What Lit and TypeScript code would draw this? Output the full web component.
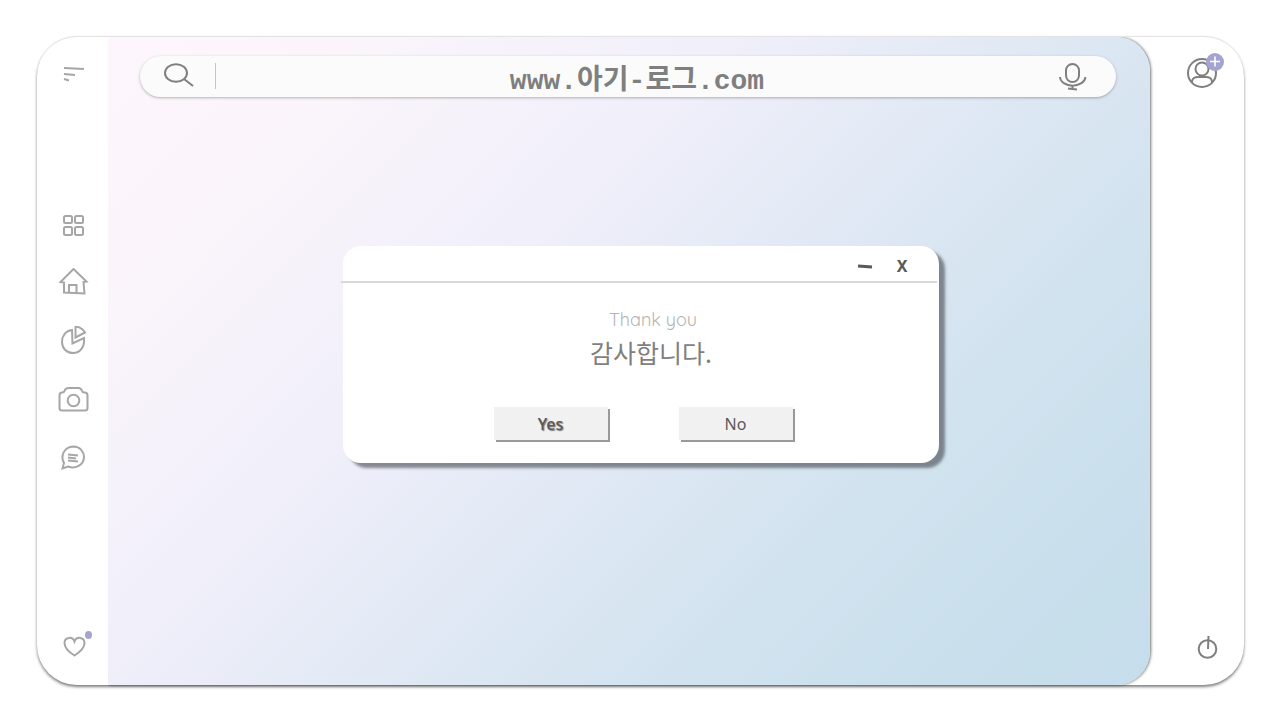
import { LitElement, html, svg, css } from "lit";
import { customElement, state } from "lit/decorators.js";

const navItems = [
  {
    label: "Apps",
    art: svg`<rect x="6" y="6" width="8" height="7" rx="1.5"/><rect x="17" y="6" width="8" height="7" rx="1.5"/><rect x="6" y="17" width="8" height="8" rx="1.5"/><rect x="17" y="17" width="8" height="8" rx="1.5"/>`,
  },
  {
    label: "Home",
    art: svg`<path d="M15.5 1 28.500 13.500L25.500 14L26.500 25.500L6 24.500V14.500L2.500 14Z"/><path d="M11 24.500V17H18.500V25"/>`,
  },
  {
    label: "Statistics",
    art: svg`<path d="M14 4C7 5 4 10.500 4 16C4 22.500 9 27 15 27C22 27 27 21 26 12L14.500 17.500Z"/><path d="M17.500 0.500C22 1 25 3 27 6.500L17.500 11.500Z"/>`,
  },
  {
    label: "Camera",
    art: svg`<path d="M4 26.500Q1.500 26.500 1.500 24V11.500Q1.500 8.500 4 8.500Q6 8.500 6.500 7Q7.500 4 10.500 4H20.500Q23 4 24 7Q24.500 8.500 26.500 8.500Q29.500 8.500 29.500 11.500V24Q29.500 26.500 27 26.500Z"/><circle cx="15.500" cy="16.500" r="5.800"/>`,
  },
  {
    label: "Messages",
    art: svg`<path d="M4.500 26.500L6 21C2.500 15 5 5 15.500 4.500C22 4.500 26 10 26 15C26 23 17 27.500 10 24.500Z"/><path d="M10 12.500L20 13.500M10 15.500L18 16.500M10 18.500L20 19.500"/>`,
  },
];

@customElement("app-root")
export class AppRoot extends LitElement {
  @state() private address = "www.아기-로그.com";

  static styles = css`
    :host {
      display: block;
      font-family: "Noto Sans", "Noto Sans CJK KR", sans-serif;
      color: #595959;
    }
    * { box-sizing: border-box; }
    button {
      font: inherit;
      color: inherit;
      border: 0;
      padding: 0;
      background: none;
      cursor: pointer;
    }
    svg {
      display: block;
      fill: none;
      stroke: currentColor;
      stroke-width: 2;
    }
    .page {
      min-height: 100vh;
      display: flex;
      padding: 36px 36px 35px 37px;
      background: #fff;
      position: relative;
    }
    .shell {
      flex: 1;
      display: flex;
      border-radius: 40px;
      background: #fff;
      border-top: 1px solid #e4e4e4;
      box-shadow: 0 2px 3px rgba(0, 0, 0, 0.5);
    }
    .side {
      width: 71px;
      padding: 20px 0 20px 1px;
      display: flex;
      flex-direction: column;
      align-items: center;
      justify-content: space-between;
      color: #a6a6a6;
    }
    .nav {
      display: flex;
      flex-direction: column;
      gap: 26px;
      padding-bottom: 36px;
    }
    .canvas {
      flex: 1;
      min-width: 0;
      padding: 19px 34px 0 32px;
      border-radius: 0 34px 34px 0;
      background: linear-gradient(135deg, #fdf6fc 0%, #fbf5fb 15%, #f0effa 37%, #d4e4f0 68%, #c9dfec 87%, #c6ddeb 100%);
      box-shadow: 1px 0 3px rgba(0, 0, 0, 0.55);
      clip-path: inset(0 -6px -6px 0);
    }
    .search {
      height: 41px;
      display: flex;
      align-items: center;
      gap: 20px;
      padding: 0 28px 2px 23px;
      border-radius: 21px;
      background: #fbfbfb;
      box-shadow: 0 1px 3px rgba(0, 0, 0, 0.28);
      color: #7f7f7f;
    }
    .divider {
      width: 1px;
      height: 26px;
      background: #c4c4c4;
    }
    .address {
      flex: 1;
      min-width: 0;
      height: 39px;
      padding: 2px 0 0;
      border: 0;
      outline: 0;
      background: none;
      color: #7f7f7f;
      text-align: center;
      font: bold 28px "Liberation Mono", "Noto Sans CJK KR", monospace;
    }
    .account {
      width: 94px;
      padding: 16px 0 25px;
      display: flex;
      flex-direction: column;
      align-items: center;
      justify-content: space-between;
      color: #7f7f7f;
    }
    .profile, .likes { position: relative; }
    .profile { padding-left: 10px; }
    .power { padding-left: 20px; }
    .menu, .likes { padding-left: 2px; }
    .badge {
      position: absolute;
      top: 0;
      right: -6px;
      width: 18px;
      height: 18px;
      border-radius: 50%;
      background: #a5a3d0;
      color: #fff;
    }
    .dot {
      position: absolute;
      top: 0;
      right: -6px;
      width: 7px;
      height: 8px;
      border-radius: 50%;
      background: #a5a3d0;
    }
    .overlay {
      position: absolute;
      inset: 0;
      display: grid;
      place-items: center;
      padding: 0 0 11px 2px;
      pointer-events: none;
    }
    .dialog {
      width: 596px;
      max-width: 90%;
      pointer-events: auto;
      border-radius: 18px;
      background: #fff;
      box-shadow: 6px 5px 3px rgba(70, 75, 80, 0.62);
      text-align: center;
    }
    .titlebar {
      height: 37px;
      display: flex;
      justify-content: flex-end;
      align-items: center;
      gap: 22px;
      padding: 5px 28px 0;
      margin: 0 2px 0 -2px;
      border-bottom: 2px solid #d9d9d9;
    }
    .close {
      font-size: 16px;
      font-weight: 700;
      line-height: 24px;
      width: 14px;
    }
    .message {
      padding: 24px 0 0 24px;
    }
    .thanks {
      margin: 0;
      font: 400 18px/26px Quicksand, "Noto Sans", sans-serif;
      color: #b3b3b3;
    }
    .korean {
      margin: 0;
      padding-right: 4px;
      font: 400 25px/38px "Noto Sans CJK KR", sans-serif;
      color: #7f7f7f;
    }
    .actions {
      display: flex;
      justify-content: center;
      gap: 71px;
      padding: 36px 0 23px 4px;
    }
    .choice {
      width: 114px;
      height: 33px;
      background: #f1f1f1;
      font-size: 16px;
      box-shadow: 2px 2px 0 #999;
    }
    .primary {
      font-weight: 500;
      text-shadow: 1px 1px 1px rgba(0, 0, 0, 0.5);
    }
  `;

  render() {
    return html`
      <div class="page">
        <div class="shell">
          <aside class="side">
            <button class="menu" aria-label="Menu">
              <svg width="24" height="32"><path d="M2 11L22 12M2 17L13 18M2 22L7 23.500"/></svg>
            </button>
            <nav class="nav">
              ${navItems.map(
                (item) => html`<button aria-label=${item.label}>
                  <svg width="31" height="32">${item.art}</svg>
                </button>`
              )}
            </nav>
            <button class="likes" aria-label="Likes">
              <svg width="24" height="34"><path d="M12.500 24.500C5 20 2.500 16 2.500 12C2.500 6 10.500 5 12.500 10.500C14.500 5 22.500 6 22.500 12C22.500 16 19.500 20 12.500 24.500Z"/></svg>
              <span class="dot"></span>
            </button>
          </aside>

          <main class="canvas">
            <form class="search" @submit=${(e: Event) => e.preventDefault()}>
              <button aria-label="Search">
                <svg width="32" height="32"><ellipse cx="13" cy="13" rx="11" ry="8.800"/><path d="M21 19L30 26"/></svg>
              </button>
              <span class="divider"></span>
              <input
                class="address"
                aria-label="Address"
                .value=${this.address}
                @input=${(e: Event) => (this.address = (e.target as HTMLInputElement).value)}
              />
              <button type="button" aria-label="Voice search">
                <svg width="30" height="32"><rect x="8" y="4" width="13" height="18" rx="6.500"/><path d="M2 17C3 28.500 26 28.500 27.500 17M14.500 26V29M10 28.500L19 29.500"/></svg>
              </button>
            </form>
          </main>

          <aside class="account">
            <button class="profile" aria-label="Profile">
              <svg width="32" height="38"><circle cx="16" cy="20" r="14"/><circle cx="16" cy="16" r="6.500"/><path d="M6 30V28Q7 24 12 24H20Q25 24 26 28V30"/></svg>
              <svg class="badge" viewBox="0 0 18 18"><path d="M9 3.500V13.500M4 8.500H14" stroke-width="1.600"/></svg>
            </button>
            <button class="power" aria-label="Power">
              <svg width="22" height="26"><circle cx="11.500" cy="15" r="8.800"/><path d="M12.500 2L12 15"/></svg>
            </button>
          </aside>
        </div>

        <div class="overlay">
          <section class="dialog" role="dialog" aria-labelledby="thanks">
            <header class="titlebar">
              <button aria-label="Minimize">
                <svg width="16" height="16"><path d="M1 8L15 9" stroke-width="3"/></svg>
              </button>
              <button class="close" aria-label="Close">X</button>
            </header>
            <div class="message">
              <p class="thanks" id="thanks">Thank you</p>
              <p class="korean" lang="ko">감사합니다.</p>
            </div>
            <div class="actions">
              <button class="choice primary">Yes</button>
              <button class="choice">No</button>
            </div>
          </section>
        </div>
      </div>
    `;
  }
}
